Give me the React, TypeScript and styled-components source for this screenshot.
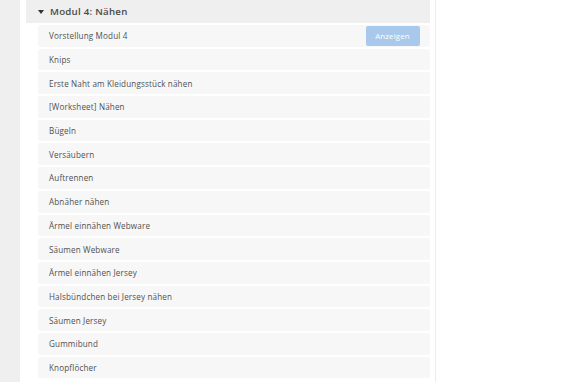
import React from "react";
import styled, { createGlobalStyle } from "styled-components";

const Global = createGlobalStyle`
  html, body { margin: 0; padding: 0; background: #ffffff; }
  body { font-family: "Open Sans", "Liberation Sans", Arial, sans-serif; }
`;

const Page = styled.div`
  display: flex;
  width: 570px;
  height: 382px;
  overflow: hidden;
  background: #ffffff;
`;

const Sidebar = styled.div`
  width: 20px;
  flex: none;
  background: #efefef;
`;

const Panel = styled.div`
  width: 416px;
  flex: none;
  padding: 0 5px 0 6px;
  box-sizing: border-box;
  border-right: 1px solid #ececec;
  background: #ffffff;
`;

const Header = styled.div`
  display: flex;
  align-items: center;
  gap: 6px;
  height: 23px;
  padding-left: 12px;
  background: #efefef;
  color: #4a4a4a;
  font-size: 9.7px;
  font-weight: 600;
  letter-spacing: 0.25px;
`;

const Caret = styled.span`
  width: 0;
  height: 0;
  border-left: 3px solid transparent;
  border-right: 3px solid transparent;
  border-top: 4px solid #333333;
`;

const List = styled.div`
  display: flex;
  flex-direction: column;
  gap: 2px;
  padding: 2px 0 0 12px;
`;

const Row = styled.div`
  display: flex;
  align-items: center;
  justify-content: space-between;
  height: 21.7px;
  padding: 0 11px 0 11px;
  background: #f7f7f7;
  border-radius: 2px;
  color: #505050;
  font-size: 8.1px;
  letter-spacing: 0.15px;
`;

const ShowButton = styled.button`
  height: 20px;
  width: 54px;
  margin-right: -0.5px;
  border: none;
  border-radius: 2px;
  background: #a8c9ec;
  color: #ffffff;
  font-family: inherit;
  font-size: 7.8px;
  letter-spacing: 0.2px;
  padding: 0;
`;

const items = [
  "Vorstellung Modul 4",
  "Knips",
  "Erste Naht am Kleidungsstück nähen",
  "[Worksheet] Nähen",
  "Bügeln",
  "Versäubern",
  "Auftrennen",
  "Abnäher nähen",
  "Ärmel einnähen Webware",
  "Säumen Webware",
  "Ärmel einnähen Jersey",
  "Halsbündchen bei Jersey nähen",
  "Säumen Jersey",
  "Gummibund",
  "Knopflöcher",
];

export default function App() {
  return (
    <>
      <Global />
      <Page>
        <Sidebar />
        <Panel>
          <Header>
            <Caret />
            Modul 4: Nähen
          </Header>
          <List>
            {items.map((t, i) => (
              <Row key={t}>
                <span>{t}</span>
                {i === 0 && <ShowButton>Anzeigen</ShowButton>}
              </Row>
            ))}
          </List>
        </Panel>
      </Page>
    </>
  );
}
